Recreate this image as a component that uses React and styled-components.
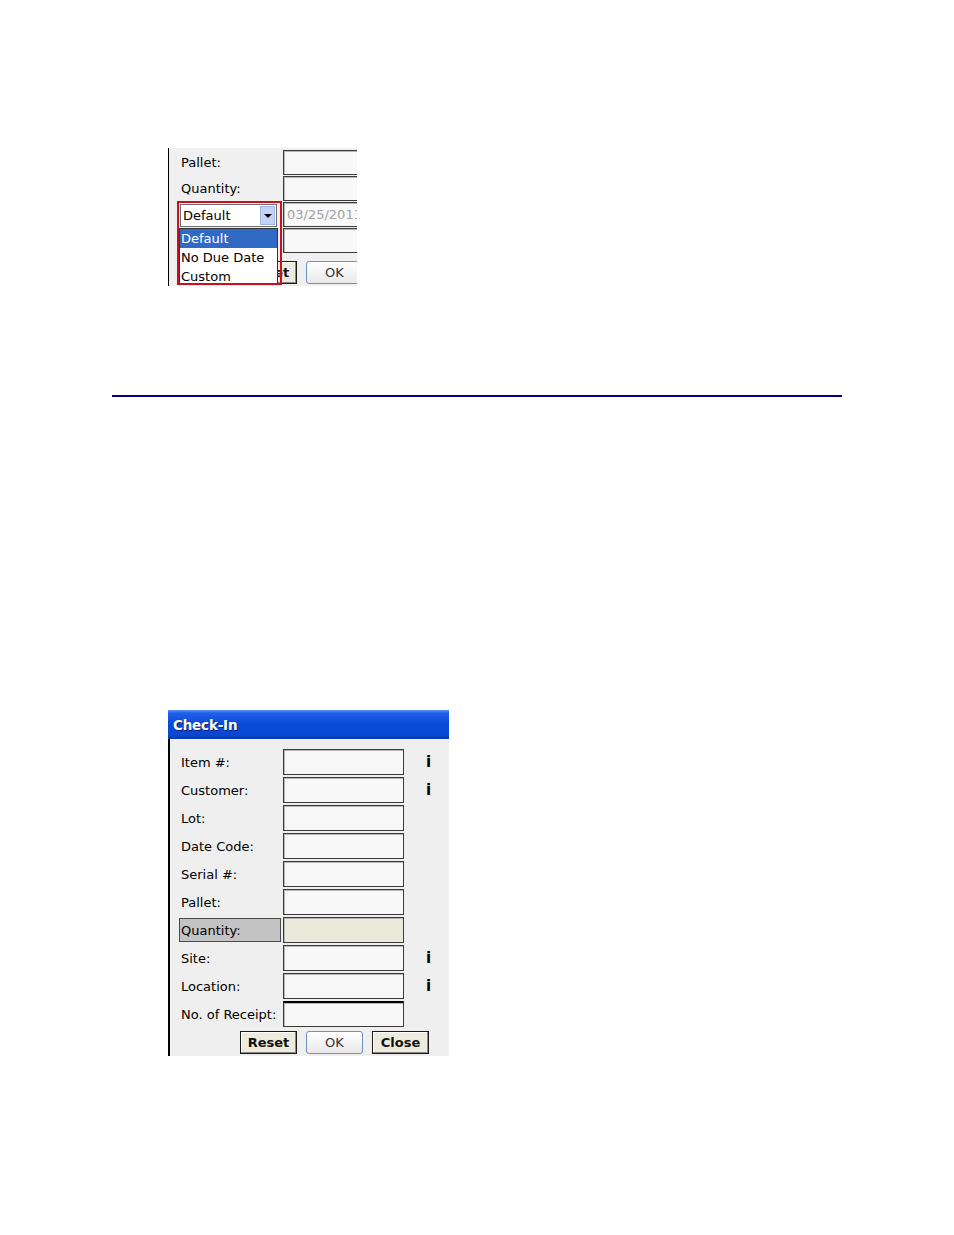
import React from 'react';
import styled, { createGlobalStyle } from 'styled-components';

const GlobalStyle = createGlobalStyle`
  html, body {
    margin: 0;
    padding: 0;
    background: #fff;
  }
  body {
    font-family: "DejaVu Sans", Tahoma, sans-serif;
    font-size: 13px;
    color: #000;
  }
`;

const Page = styled.div`
  width: 954px;
  min-height: 1235px;
  display: flex;
  flex-direction: column;
`;

// cropped screenshot of the due date dropdown
const Crop = styled.div`
  margin: 148px 0 0 168px;
  width: 189px;
  height: 138px;
  overflow: hidden;
  background: #f0f0f0;
  border-left: 1px solid #000;
  padding: 2px 0 0 10px;
  box-sizing: border-box;
`;

const Rule = styled.div`
  margin: 109px 0 0 112px;
  width: 730px;
  height: 2px;
  background: #000080;
`;

const Dialog = styled.div`
  margin: 313px 0 0 168px;
  width: 281px;
  background: #efefef;
`;

const TitleBar = styled.div`
  height: 29px;
  display: flex;
  align-items: center;
  padding-left: 5px;
  background: linear-gradient(
    to bottom,
    #5b93f3 0%,
    #2262e8 10%,
    #0b4bd9 45%,
    #0a47d3 85%,
    #0738ad 100%
  );
  color: #fff;
  font-weight: bold;
  font-size: 13.5px;
  letter-spacing: -0.2px;
  text-shadow: 1px 1px 0 #0a1f6e;
`;

const Body = styled.div`
  border-left: 2px solid #000;
  padding: 10px 0 2px 9px;
`;

const Form = styled.div`
  display: flex;
  flex-direction: column;
  gap: ${(p) => p.$gap}px;
`;

const Row = styled.div`
  display: grid;
  grid-template-columns: 102px 121px 1fr;
  column-gap: 2px;
  height: ${(p) => p.$h}px;
  align-items: center;
`;

const Label = styled.div`
  height: ${(p) => (p.$selected ? '24px' : 'auto')};
  display: flex;
  align-items: center;
  padding-left: 1px;
  white-space: nowrap;
  box-sizing: border-box;
  background: ${(p) => (p.$selected ? '#c3c3c3' : 'transparent')};
  border: 1px solid ${(p) => (p.$selected ? '#4a4a4a' : 'transparent')};
`;

const ComboCell = styled.div`
  position: relative;
  align-self: stretch;
`;

const Field = styled.div`
  height: 100%;
  box-sizing: border-box;
  background: ${(p) => (p.$tone === 'beige' ? '#eaeadb' : '#f8f8f8')};
  border: 1px solid #3a3a3a;
  border-top-width: ${(p) => (p.$thick ? 2 : 1)}px;
  border-top-color: ${(p) => (p.$thick ? '#000' : '#3a3a3a')};
  box-shadow: inset 1px 1px 0 #b8b8b8;
  display: flex;
  align-items: center;
  padding-left: 3px;
  color: #a3a3a3;
  white-space: nowrap;
  overflow: hidden;
`;

const Info = styled.div`
  padding-left: 20px;
  font-size: 15px;
  font-weight: bold;
`;

const ButtonBar = styled.div`
  display: flex;
  gap: 9px;
  margin-top: ${(p) => p.$top}px;
  padding-left: ${(p) => p.$left}px;
`;

const Button = styled.div`
  width: 57px;
  height: 23px;
  box-sizing: border-box;
  display: flex;
  align-items: center;
  justify-content: center;
  flex-shrink: 0;
  font-weight: ${(p) => (p.$plain ? 'normal' : 'bold')};
  color: ${(p) => (p.$plain ? '#333' : '#111')};
  border: 1px solid ${(p) => (p.$plain ? '#6f90c2' : '#1a1a1a')};
  border-radius: ${(p) => (p.$plain ? '3px' : '0')};
  background: ${(p) =>
    p.$plain ? 'linear-gradient(#ffffff, #e9e9e9)' : '#ecebdc'};
  box-shadow: ${(p) =>
    p.$plain ? 'none' : 'inset -1px -1px 0 #8a8a8a, inset 1px 1px 0 #fff'};
`;

// open combobox with its list, outlined in red
const RedFrame = styled.div`
  position: absolute;
  left: -2px;
  top: -1px;
  width: 105px;
  height: 84px;
  box-sizing: border-box;
  border: 2px solid #c8101e;
  overflow: hidden;
  z-index: 2;
`;

const Select = styled.div`
  margin: 1px 0 0 1px;
  width: 97px;
  height: 23px;
  box-sizing: border-box;
  background: #fff;
  border: 1px solid #6d6d6d;
  display: flex;
  align-items: center;
  justify-content: space-between;
  padding-left: 2px;
`;

const Arrow = styled.div`
  width: 15px;
  height: 19px;
  margin-right: 1px;
  background: #c3d3f7;
  border: 1px solid #9fb4e4;
  box-sizing: border-box;
  display: flex;
  align-items: center;
  justify-content: center;

  &::after {
    content: '';
    border-left: 4px solid transparent;
    border-right: 4px solid transparent;
    border-top: 4px solid #000;
  }
`;

const List = styled.div`
  width: 99px;
  margin-top: 1px;
  background: #fff;
  border: 1px solid #333;
  box-sizing: border-box;
`;

const Option = styled.div`
  height: 19px;
  line-height: 19px;
  padding-left: 1px;
  white-space: nowrap;
  background: ${(p) => (p.$active ? '#316ac5' : 'transparent')};
  color: ${(p) => (p.$active ? '#fff' : '#000')};
`;

const fields = [
  { label: 'Item #:', info: true },
  { label: 'Customer:', info: true },
  { label: 'Lot:' },
  { label: 'Date Code:' },
  { label: 'Serial #:' },
  { label: 'Pallet:' },
  { label: 'Quantity:', selected: true },
  { label: 'Site:', info: true },
  { label: 'Location:', info: true },
  { label: 'No. of Receipt:', thick: true },
];

const App = () => {
  return (
    <Page>
      <GlobalStyle />

      <Crop>
        <Form $gap={1}>
          <Row $h={25}>
            <Label>Pallet:</Label>
            <Field />
          </Row>
          <Row $h={25}>
            <Label>Quantity:</Label>
            <Field />
          </Row>
          <Row $h={25}>
            <ComboCell>
              <RedFrame>
                <Select>
                  Default
                  <Arrow />
                </Select>
                <List>
                  <Option $active>Default</Option>
                  <Option>No Due Date</Option>
                  <Option>Custom</Option>
                </List>
              </RedFrame>
            </ComboCell>
            <Field>03/25/2011</Field>
          </Row>
          <Row $h={25}>
            <Label />
            <Field />
          </Row>
        </Form>
        <ButtonBar $top={8} $left={61}>
          <Button>Reset</Button>
          <Button $plain>OK</Button>
        </ButtonBar>
      </Crop>

      <Rule />

      <Dialog>
        <TitleBar>Check-In</TitleBar>
        <Body>
          <Form $gap={2}>
            {fields.map((f) => (
              <Row key={f.label} $h={26}>
                <Label $selected={f.selected}>{f.label}</Label>
                <Field $tone={f.selected ? 'beige' : 'white'} $thick={f.thick} />
                <Info>{f.info ? 'i' : ''}</Info>
              </Row>
            ))}
          </Form>
          <ButtonBar $top={4} $left={61}>
            <Button>Reset</Button>
            <Button $plain>OK</Button>
            <Button>Close</Button>
          </ButtonBar>
        </Body>
      </Dialog>
    </Page>
  );
};

export default App;
